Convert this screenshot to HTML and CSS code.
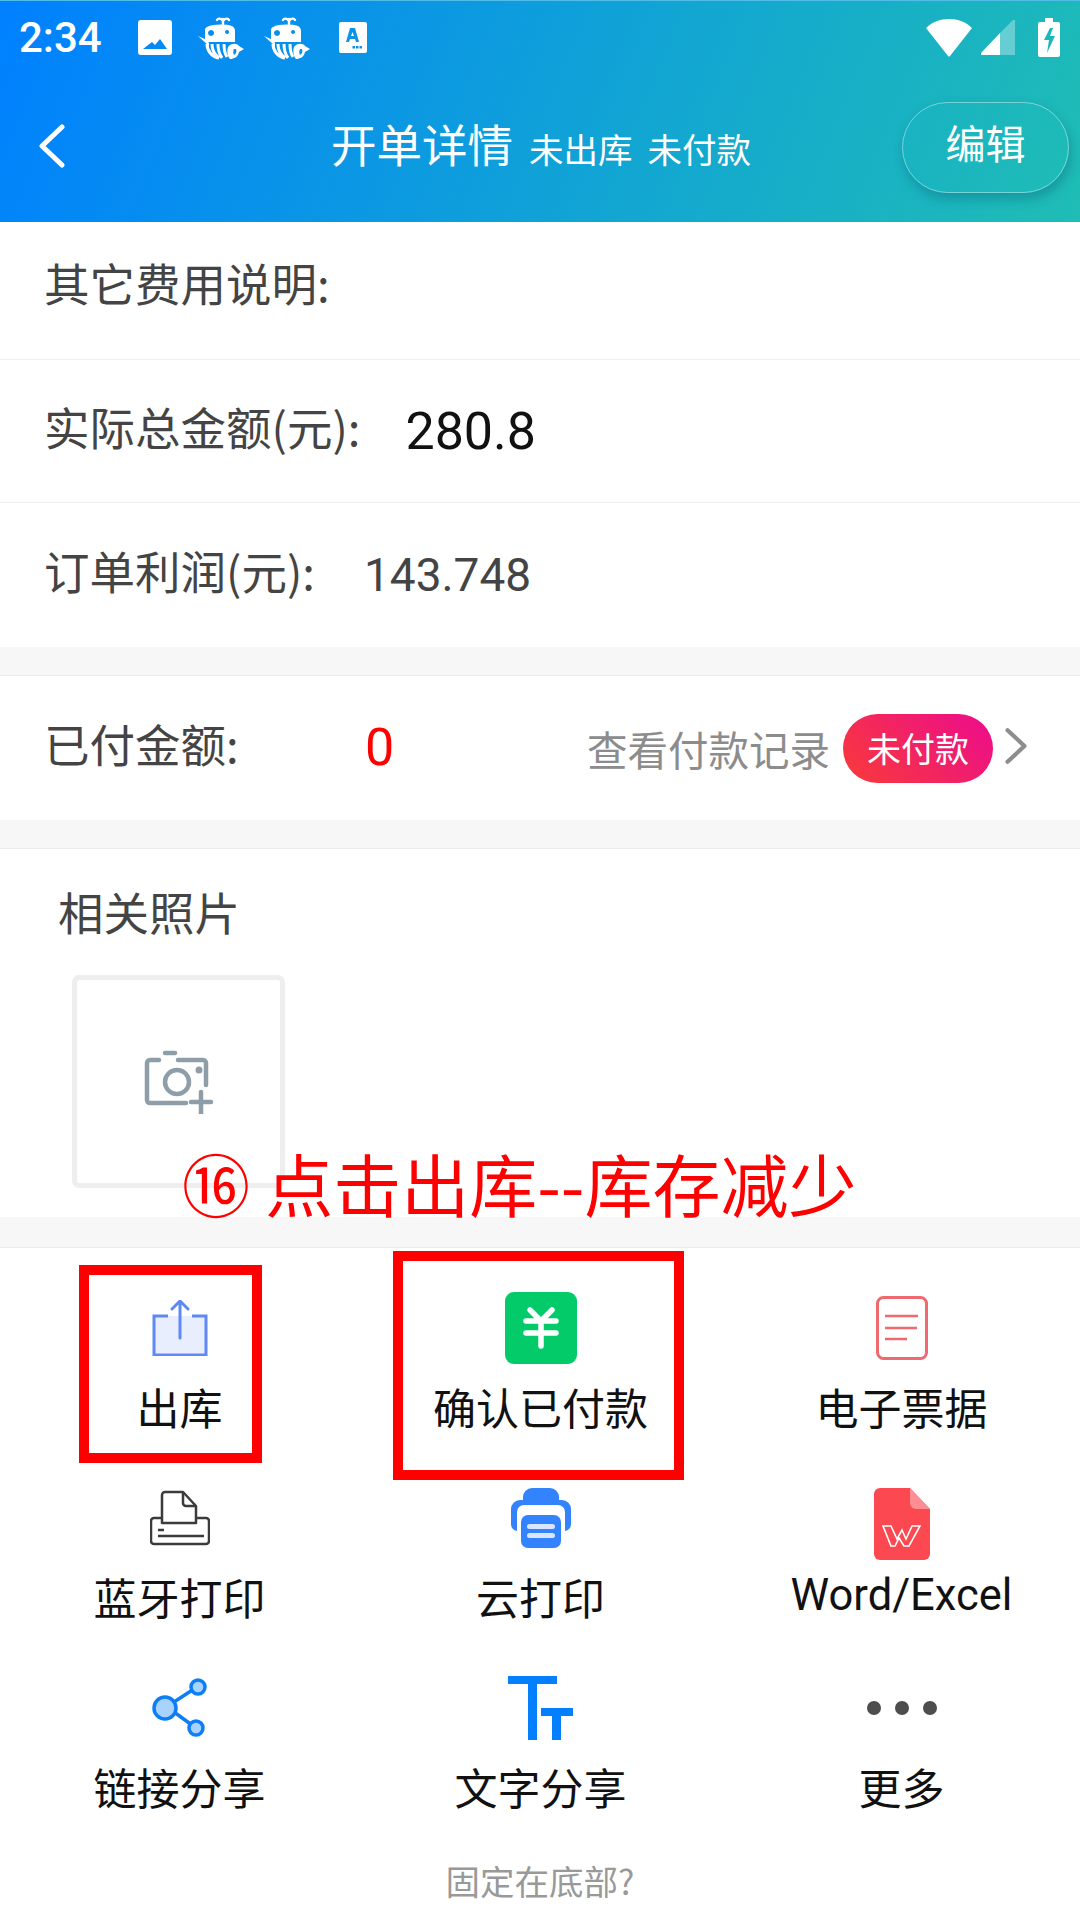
FILE: index.html
```html
<!DOCTYPE html>
<html>
<head>
  <title>开单详情</title>
  <link rel="stylesheet" href="styles.css">
</head>
<body>
  <div class="page">
    <div class="header">
      <div class="status-bar">
        <span class="clock">2:34</span>
        <svg class="st-pic" width="34" height="35" viewBox="0 0 34 35"><path fill="#fff" fill-rule="evenodd" d="M3 0h28a3 3 0 0 1 3 3v29a3 3 0 0 1-3 3H3a3 3 0 0 1-3-3V3a3 3 0 0 1 3-3zM5 29h24l-7-10-5 6-3-3z"/></svg>
        <svg class="st-whale" width="46" height="44" viewBox="0 0 46 44"><use href="#whale"/></svg>
        <svg class="st-whale" width="46" height="44" viewBox="0 0 46 44"><use href="#whale"/></svg>
        <svg class="st-a" width="28" height="31" viewBox="0 0 28 31"><path fill="#fff" fill-rule="evenodd" d="M2 0h24a2 2 0 0 1 2 2v27a2 2 0 0 1-2 2H2a2 2 0 0 1-2-2V2a2 2 0 0 1 2-2zM11 6 7 20h3l1-3h5l1 3h3L16 6zM12 14l1.500-4 1.500 4zM17 24h2.500v2.500H17zM20.500 24H23v2.500h-2.500zM13.500 24H16v2.500h-2.500z"/></svg>
        <span class="status-right">
          <svg width="46" height="38" viewBox="0 0 46 38"><path fill="#fff" d="M0 9C6 3 14 0 23 0s17 3 23 9L24 37a1.300 1.300 0 0 1-2 0z"/></svg>
          <svg width="34" height="35" viewBox="0 0 34 35"><path fill="#fff" d="M19 13v22H1a1 1 0 0 1-1-2z"/><path fill="#fff" opacity=".33" d="M19 13 32 0a1 1 0 0 1 2 1v34H19z"/></svg>
          <svg class="st-batt" width="22" height="39" viewBox="0 0 22 39"><path fill="#fff" fill-rule="evenodd" d="M7 0h8v4h5a2 2 0 0 1 2 2v31a2 2 0 0 1-2 2H2a2 2 0 0 1-2-2V6a2 2 0 0 1 2-2h5zM12 10 6 22h5l-2 13 8-17h-5l3-8z"/></svg>
        </span>
      </div>
      <div class="nav-bar">
        <svg class="back" width="28" height="44" viewBox="0 0 28 44"><path fill="none" stroke="#fff" stroke-width="5" stroke-linecap="round" stroke-linejoin="round" d="M24 3 4 22l20 19"/></svg>
        <div class="nav-title">开单详情<span class="nav-status">未出库</span><span class="nav-status">未付款</span></div>
        <div class="edit-btn">编辑</div>
      </div>
    </div>

    <div class="row row-first"><span class="label">其它费用说明:</span></div>
    <div class="row"><span class="label">实际总金额(元):</span><span class="total">280.8</span></div>
    <div class="row row-last"><span class="label">订单利润(元):</span><span class="profit">143.748</span></div>

    <div class="gap"></div>

    <div class="row row-pay">
      <span class="label paid-label">已付金额:</span>
      <span class="paid">0</span>
      <span class="pay-log">查看付款记录</span>
      <span class="pay-badge">未付款</span>
      <svg class="chev" width="24" height="38" viewBox="0 0 22 36"><path fill="none" stroke="#8d8d8d" stroke-width="4" stroke-linecap="round" stroke-linejoin="round" d="M3 3l16 15L3 33"/></svg>
    </div>

    <div class="gap"></div>

    <div class="photos">
      <div class="photos-title">相关照片</div>
      <div class="photo-box">
        <svg width="70" height="64" viewBox="0 0 70 64"><g fill="none" stroke="#8e9ea8" stroke-width="4.500" stroke-linecap="round" stroke-linejoin="round"><path d="M15 10H6a3 3 0 0 0-3 3v37a3 3 0 0 0 3 3h36M34 10h25a3 3 0 0 1 3 3v22"/><path d="M21 3h10"/><circle cx="33" cy="32" r="12"/><path d="M47 52h20M57 42v21"/></g><circle cx="55" cy="20" r="3.500" fill="#8e9ea8"/></svg>
      </div>
    </div>

    <div class="gap gap-tools"></div>

    <div class="tools">
      <div class="tool">
        <svg width="56" height="56" viewBox="0 0 56 56"><path fill="#e8eefe" d="M2 16h52v39H2z"/><path fill="none" stroke="#5f87f5" stroke-width="3" d="M16 16H2v39h52V16H40"/><path fill="none" stroke="#5f87f5" stroke-width="3" stroke-linecap="round" stroke-linejoin="round" d="M28 38V2M20 9l8-8 8 8"/></svg>
        <span class="tool-name">出库</span>
      </div>
      <div class="tool">
        <svg width="72" height="72" viewBox="0 0 72 72"><rect width="72" height="72" rx="9" fill="#04cb69"/><path fill="none" stroke="#fff" stroke-width="5.500" stroke-linecap="round" stroke-linejoin="round" d="M25 18l11 11 11-11M21 29h30M21 41h30M36 29v25"/></svg>
        <span class="tool-name">确认已付款</span>
      </div>
      <div class="tool">
        <svg width="52" height="64" viewBox="0 0 52 64"><rect x="1.500" y="1.500" width="49" height="61" rx="6" fill="none" stroke="#ee6a6e" stroke-width="3"/><path fill="none" stroke="#ee6a6e" stroke-width="2.500" d="M9 20h33M9 32h32M9 43h22"/></svg>
        <span class="tool-name">电子票据</span>
      </div>

      <div class="tool">
        <svg width="60" height="56" viewBox="0 0 60 56"><g fill="none" stroke="#3b3b3b" stroke-width="2.500" stroke-linejoin="round"><path d="M12 33V5a3 3 0 0 1 3-3h18l13 14v17z"/><path d="M33 2v11a3 3 0 0 0 3 3h10"/><path d="M12 28H4a3 3 0 0 0-3 3v20a3 3 0 0 0 3 3h52a3 3 0 0 0 3-3V31a3 3 0 0 0-3-3H46"/><path d="M8 46h46M8 40h6"/></g></svg>
        <span class="tool-name">蓝牙打印</span>
      </div>
      <div class="tool">
        <svg width="60" height="60" viewBox="0 0 60 60"><path fill="#3283fd" d="M12 9a9 9 0 0 1 9-9h18a9 9 0 0 1 9 9v3h3a9 9 0 0 1 9 9v15a7 7 0 0 1-6 7V24a7 7 0 0 0-7-7H13a7 7 0 0 0-7 7v19a7 7 0 0 1-6-7V21a9 9 0 0 1 9-9h3z"/><rect x="10" y="27" width="40" height="33" rx="7" fill="#3283fd"/><rect x="16" y="36" width="28" height="5" rx="2.500" fill="#d9e6ff"/><rect x="16" y="45" width="28" height="5" rx="2.500" fill="#d9e6ff"/></svg>
        <span class="tool-name">云打印</span>
      </div>
      <div class="tool tool-word">
        <svg width="58" height="72" viewBox="0 0 56 72"><path fill="#fc4850" d="M6 0h30l20 21v45a6 6 0 0 1-6 6H6a6 6 0 0 1-6-6V6a6 6 0 0 1 6-6z"/><path fill="#fe8e93" d="M36 0l20 21H42a6 6 0 0 1-6-6z"/><path fill="none" stroke="#fff" stroke-width="1.600" d="M9 38h8l6 13 5-9 4 9 6-13h8l-11 20h-5l-5-8-4 8h-4z"/></svg>
        <span class="tool-name tool-latin">Word/Excel</span>
      </div>

      <div class="tool">
        <svg width="56" height="60" viewBox="0 0 56 60"><g stroke="#0d7ef5" stroke-width="3.500"><path d="M22 24 45 9M22 34l22 16" fill="none"/><circle cx="13" cy="30" r="11" fill="#a9d3ff"/><circle cx="46" cy="9" r="7" fill="#a9d3ff"/><circle cx="44" cy="50" r="7" fill="#a9d3ff"/></g></svg>
        <span class="tool-name">链接分享</span>
      </div>
      <div class="tool">
        <svg width="66" height="66" viewBox="0 0 66 66"><path fill="#047ffe" d="M0 1h49v8H29v56h-9V9H0zM33 33h32v8H53v24h-9V41H33z"/></svg>
        <span class="tool-name">文字分享</span>
      </div>
      <div class="tool">
        <svg width="72" height="16" viewBox="0 0 72 16"><g fill="#4d4d4d"><circle cx="8" cy="8" r="7"/><circle cx="36" cy="8" r="7"/><circle cx="64" cy="8" r="7"/></g></svg>
        <span class="tool-name">更多</span>
      </div>
    </div>

    <div class="pin-bottom">固定在底部?</div>

    <!-- red marks drawn over the screenshot -->
    <div class="note">⑯ 点击出库--库存减少</div>
    <div class="mark mark-out"></div>
    <div class="mark mark-pay"></div>
  </div>

  <svg class="defs" width="0" height="0">
    <defs>
      <g id="whale">
        <path fill="none" stroke="#fff" stroke-width="2.400" stroke-linecap="round" d="M25 8V3M25 5c-2-3-5-3-6-1M25 5c2-3 5-3 6-1"/>
        <path fill="#fff" fill-rule="evenodd" d="M9 11c6-3 18-3 25-1 2 1 3 3 3 5v11H7V15c0-2 0-3 2-4zM13 14a3 3 0 1 0 .1 0zM29 14a2 2 0 1 0 .1 0z"/>
        <path fill="#fff" d="M0 20l9 4 2 3v3z"/>
        <path fill="none" stroke="#fff" stroke-width="3" d="M9 28c0 7 5 13 12 14M14 28c0 6 3 11 7 14M20 28c0 6 1 10 4 14M26 28c0 5 1 10 3 13"/>
        <path fill="#fff" fill-rule="evenodd" d="M30 31c3-4 9-4 11-1l5 3-5 3c-1 5-5 7-9 7-3-3-3-9-2-12zM36 33c-1 2-1 4 0 6 2-1 3-3 2-6z"/>
      </g>
    </defs>
  </svg>
</body>
</html>
```

FILE: styles.css
```css
* {
  box-sizing: border-box;
}

body {
  margin: 0;
  background: #fff;
  font-family: "Noto Sans CJK SC", "Noto Sans", sans-serif;
}

.page {
  position: relative;
  width: 1080px;
  height: 1920px;
  overflow: hidden;
}

.defs {
  position: absolute;
}

/* header */
.header {
  height: 222px;
  color: #fff;
  border-top: 1px solid #4fbde8;
  background: linear-gradient(112deg, #0080ff 0%, #12a6d2 60%, #1fbdb5 100%);
}

.status-bar {
  display: flex;
  align-items: center;
  height: 73px;
  padding: 0 20px 0 19px;
}

.clock {
  width: 119px;
  font-family: Roboto, sans-serif;
  font-size: 42px;
  font-weight: 500;
}

.st-whale {
  margin-left: 20px;
}

.st-pic + .st-whale {
  margin-left: 26px;
}

.st-a {
  margin-left: 29px;
}

.status-right {
  display: flex;
  align-items: center;
  gap: 9px;
  margin-left: auto;
}

.st-batt {
  margin-left: 14px;
}

.nav-bar {
  position: relative;
  display: flex;
  align-items: center;
  height: 148px;
  padding-left: 38px;
  padding-bottom: 10px;
}

.back {
  margin-top: 6px;
}

.nav-title {
  margin-left: 265px;
  font-size: 45.500px;
  white-space: nowrap;
}

.nav-status {
  margin-left: 16px;
  font-size: 34.500px;
}

.nav-status + .nav-status {
  margin-left: 15px;
}

.edit-btn {
  position: absolute;
  top: 28px;
  left: 902px;
  width: 167px;
  height: 91px;
  line-height: 79px;
  text-align: center;
  font-size: 40px;
  border: 1px solid rgba(255, 255, 255, 0.4);
  border-radius: 46px;
  box-shadow: 2px 6px 12px rgba(0, 60, 90, 0.28);
}

/* info rows */
.row {
  display: flex;
  align-items: center;
  height: 143px;
  padding-left: 44px;
  border-bottom: 1px solid #eee;
  color: #444;
  font-size: 45.500px;
}

.row-first {
  height: 138px;
  padding-bottom: 6px;
}

.row-last {
  height: 144px;
  border-bottom: none;
}

.label {
  margin-bottom: 11px;
}

.total {
  margin-left: 45px;
  font-family: Roboto, sans-serif;
  font-size: 52px;
  color: #111;
}

.profit {
  margin-left: 49px;
  font-family: Roboto, sans-serif;
  font-size: 46px;
}

.gap {
  height: 29px;
  background: #f7f7f7;
  border-bottom: 1px solid #ececec;
}

.row-pay {
  height: 144px;
  border-bottom: none;
}

.paid-label {
  width: 321px;
}

.paid {
  width: 222px;
  margin-bottom: 2px;
  font-family: Roboto, sans-serif;
  font-size: 52px;
  color: #ff0000;
}

.pay-log {
  font-size: 40.500px;
  color: #8c8c8c;
  white-space: nowrap;
}

.pay-badge {
  width: 150px;
  height: 69px;
  margin-left: 13px;
  line-height: 68px;
  text-align: center;
  font-size: 34px;
  color: #fff;
  border-radius: 35px;
  background: linear-gradient(45deg, #f83b38 0%, #ec0b8e 100%);
}

.chev {
  margin-left: 11px;
  margin-bottom: 4px;
}

/* photos */
.photos {
  height: 368px;
  padding: 36px 0 0 58px;
}

.photos-title {
  font-size: 45.500px;
  line-height: 52px;
  color: #444;
}

.photo-box {
  display: flex;
  align-items: center;
  justify-content: center;
  width: 213px;
  height: 213px;
  margin: 38px 0 0 14px;
  border: 5px solid #eee;
  border-radius: 7px;
}

.gap-tools {
  height: 31px;
}

/* tool grid */
.tools {
  display: grid;
  grid-template-columns: 361px 361px 361px;
  margin-left: -1px;
  padding-top: 35px;
}

.tool {
  display: grid;
  grid-template-rows: 90px 52px;
  row-gap: 7px;
  justify-items: center;
  align-items: center;
  height: 190px;
}

.tool-word svg {
  margin-top: 12px;
}

.tool-name {
  font-size: 43px;
  line-height: 52px;
  color: #111;
  white-space: nowrap;
}

.tool-latin {
  font-family: Roboto, sans-serif;
  font-size: 43.500px;
}

.pin-bottom {
  margin-top: 2px;
  text-align: center;
  font-size: 34.500px;
  color: #999;
}

/* red marks */
.note {
  position: absolute;
  top: 1143px;
  left: 182px;
  font-size: 68px;
  line-height: 80px;
  color: #ff0000;
  white-space: nowrap;
}

.mark {
  position: absolute;
  border: 10px solid #ff0000;
}

.mark-out {
  top: 1265px;
  left: 79px;
  width: 183px;
  height: 198px;
}

.mark-pay {
  top: 1251px;
  left: 393px;
  width: 291px;
  height: 229px;
}
```
